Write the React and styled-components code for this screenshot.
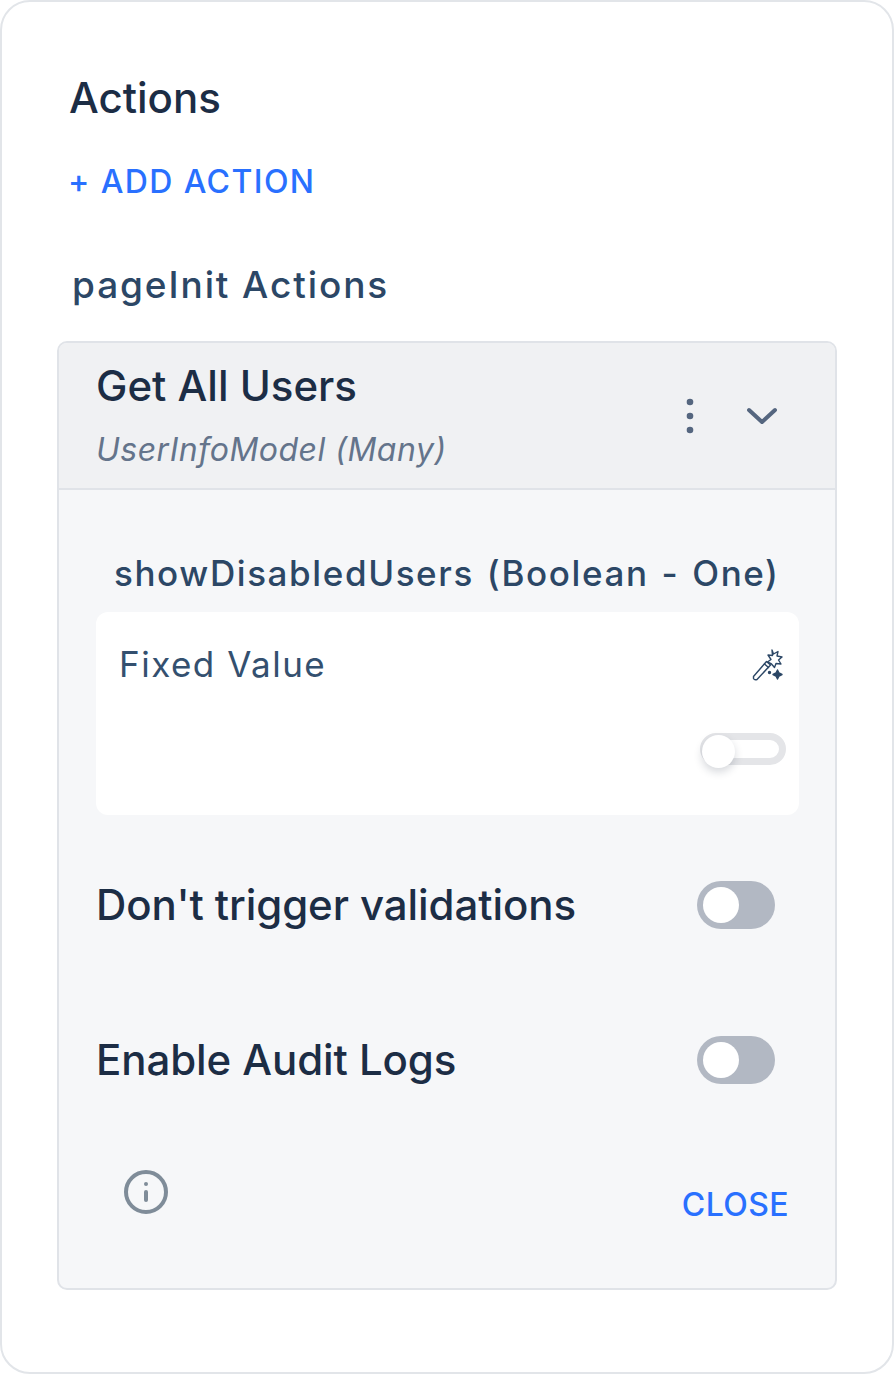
import styled, { createGlobalStyle } from "styled-components";
import { Info } from "lucide-react";

const GlobalStyle = createGlobalStyle`
  html, body { margin: 0; padding: 0; background: #fff; }
  * { box-sizing: border-box; }
  body { font-family: Inter, "Liberation Sans", sans-serif; }
`;

const Panel = styled.div`
  width: 894px;
  height: 1374px;
  border: 2px solid #e2e5e9;
  border-radius: 30px;
  background: #fff;
  padding: 68px 55px 0 55px;
`;

const Title = styled.h2`
  margin: 0 0 0 12px;
  font-size: 42px;
  line-height: 56px;
  font-weight: 500;
  color: #1c2d45;
`;

const AddButton = styled.div`
  margin: 40px 0 0 11px;
  font-size: 32px;
  line-height: 32px;
  letter-spacing: 1.4px;
  font-weight: 500;
  color: #2970ff;
`;

const SectionName = styled.div`
  margin: 61px 0 0 15px;
  font-size: 37px;
  line-height: 52px;
  letter-spacing: 1.9px;
  font-weight: 500;
  color: #2c4766;
`;

const Card = styled.div`
  margin-top: 30px;
  width: 780px;
  height: 949px;
  border: 2px solid #e0e3e8;
  border-radius: 10px;
  background: #f6f7f9;
  overflow: hidden;
`;

const CardHeader = styled.div`
  height: 147px;
  background: #f0f1f3;
  border-bottom: 2px solid #e0e3e8;
  padding: 15px 57px 0 37px;
  display: flex;
  justify-content: space-between;
  align-items: flex-start;
`;

const ActionName = styled.div`
  font-size: 42px;
  line-height: 56px;
  font-weight: 500;
  color: #1c2d45;
`;

const ActionModel = styled.div`
  margin-top: 14px;
  font-size: 32px;
  line-height: 44px;
  letter-spacing: 0.5px;
  font-style: italic;
  color: #64748b;
`;

const HeaderIcons = styled.div`
  display: flex;
  align-items: center;
  gap: 51px;
  margin-top: 39px;
`;

const CardBody = styled.div`
  padding: 57px 37px 0 37px;
`;

const ParamName = styled.div`
  margin-left: 18px;
  font-size: 35px;
  line-height: 52px;
  letter-spacing: 1.6px;
  word-spacing: 2px;
  font-weight: 500;
  color: #2c4766;
  white-space: pre;
`;

const ValueBox = styled.div`
  position: relative;
  margin-top: 13px;
  width: 703px;
  height: 203px;
  border-radius: 12px;
  background: #fff;
  padding: 27px 23px;
`;

const ValueLabel = styled.div`
  font-size: 35px;
  line-height: 50px;
  letter-spacing: 1.5px;
  color: #34506f;
`;

const WandSlot = styled.div`
  position: absolute;
  top: 36px;
  right: 14px;
  line-height: 0;
`;

const FlatSwitch = styled.div`
  position: absolute;
  left: 604px;
  top: 121px;
  width: 86px;
  height: 32px;
  border: 7px solid #e4e5e8;
  border-radius: 16px;
  background: #fff;
`;

const FlatKnob = styled.div`
  position: absolute;
  left: -5px;
  top: -5px;
  width: 33px;
  height: 33px;
  border-radius: 50%;
  background: #fff;
  box-shadow: 0 4px 8px rgba(30, 40, 60, 0.18);
`;

const OptionRow = styled.div`
  display: flex;
  justify-content: space-between;
  align-items: center;
  height: 48px;
  margin-top: ${(p) => p.$top}px;
  padding-right: 23px;
`;

const OptionLabel = styled.div`
  font-size: 42px;
  line-height: 48px;
  letter-spacing: -0.08px;
  font-weight: 500;
  color: #1c2d45;
`;

const Toggle = styled.div`
  width: 78px;
  height: 48px;
  border-radius: 24px;
  background: #b2b8c3;
  padding: 6px;
`;

const ToggleKnob = styled.div`
  width: 36px;
  height: 36px;
  border-radius: 50%;
  background: #fff;
`;

const CardFooter = styled.div`
  display: flex;
  justify-content: space-between;
  align-items: flex-start;
  margin-top: 84px;
  padding: 0 9px 0 26px;
`;

const InfoIcon = styled(Info)`
  display: block;
  width: 48px;
  height: 48px;
  color: #7f8c99;
`;

const CloseButton = styled.div`
  margin-top: 21px;
  font-size: 32px;
  line-height: 32px;
  letter-spacing: 0.4px;
  font-weight: 500;
  color: #2970ff;
`;

const Kebab = () => (
  <svg width="10" height="38" viewBox="0 0 10 38" fill="#55667f">
    <circle cx="5" cy="5" r="3.3" />
    <circle cx="5" cy="19" r="3.3" />
    <circle cx="5" cy="33" r="3.3" />
  </svg>
);

const Chevron = () => (
  <svg width="32" height="20" viewBox="0 0 32 20" fill="none" stroke="#55667f" strokeWidth="4" strokeLinecap="round" strokeLinejoin="round">
    <path d="M3 4 L16 16 L29 4" />
  </svg>
);

const Wand = () => (
  <svg width="34" height="34" viewBox="0 0 34 34" fill="none" stroke="#2c4766" strokeWidth="1.4" strokeLinejoin="round" strokeLinecap="round">
    <path d="M2.5 28.5 L15.5 13.5 L19.5 17 L6 31.5 Q3.5 32.5 2.5 30.5 Z" />
    <path d="M13.5 16 L17.5 19.5" />
    <path d="M21 2 L22.5 6 L27 3.5 L26 8 L31 9 L27.5 12 L30 16 L25 15.5 L23.5 19.5 L20.5 16 L16.5 14 L20 11.5 L17 7 L21.5 7.5 Z" />
    <path d="M26.5 22 L28 25 L31 26.5 L28 28 L26.5 31 L25 28 L22 26.5 L25 25 Z" fill="#2c4766" />
    <circle cx="18.5" cy="24.5" r="1" fill="#2c4766" />
  </svg>
);

export default function App() {
  return (
    <>
      <GlobalStyle />
      <Panel>
        <Title>Actions</Title>
        <AddButton>+ ADD ACTION</AddButton>
        <SectionName>pageInit Actions</SectionName>
        <Card>
          <CardHeader>
            <div>
              <ActionName>Get All Users</ActionName>
              <ActionModel>UserInfoModel (Many)</ActionModel>
            </div>
            <HeaderIcons>
              <Kebab />
              <Chevron />
            </HeaderIcons>
          </CardHeader>
          <CardBody>
            <ParamName>showDisabledUsers (Boolean - One)</ParamName>
            <ValueBox>
              <ValueLabel>Fixed Value</ValueLabel>
              <WandSlot><Wand /></WandSlot>
              <FlatSwitch><FlatKnob /></FlatSwitch>
            </ValueBox>
            <OptionRow $top={66}>
              <OptionLabel>Don't trigger validations</OptionLabel>
              <Toggle><ToggleKnob /></Toggle>
            </OptionRow>
            <OptionRow $top={107}>
              <OptionLabel>Enable Audit Logs</OptionLabel>
              <Toggle><ToggleKnob /></Toggle>
            </OptionRow>
            <CardFooter>
              <InfoIcon strokeWidth={2} />
              <CloseButton>CLOSE</CloseButton>
            </CardFooter>
          </CardBody>
        </Card>
      </Panel>
    </>
  );
}
